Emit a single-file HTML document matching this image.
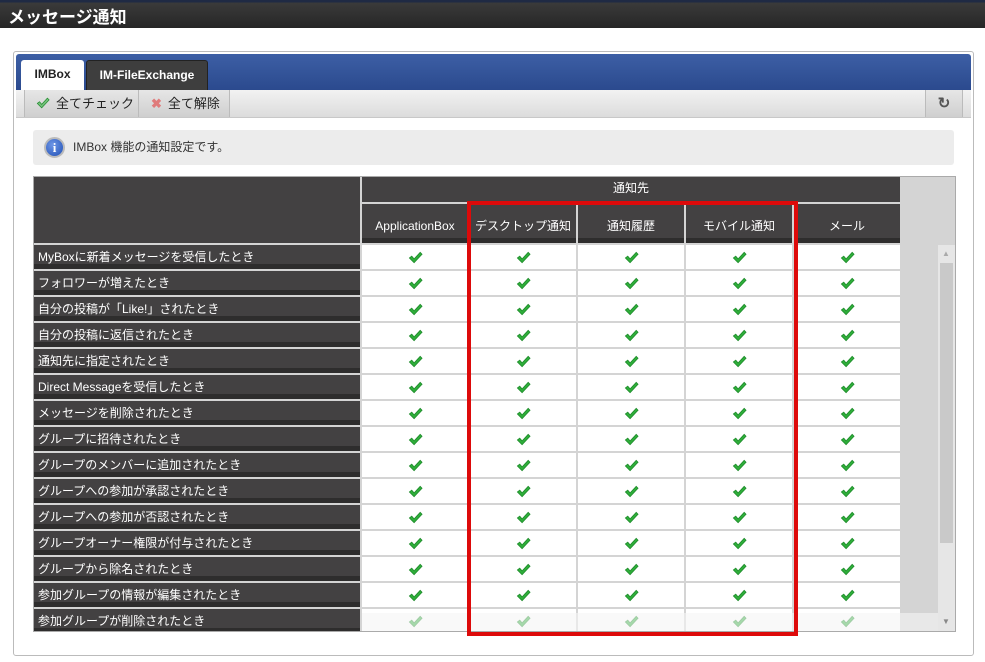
<!DOCTYPE html>
<html><head><meta charset="utf-8">
<style>
*{margin:0;padding:0;box-sizing:border-box}
body{width:985px;height:662px;background:#fff;position:relative;overflow:hidden;font-family:"Liberation Sans","Noto Sans CJK JP",sans-serif}
.a{position:absolute}
#hdr{left:0;top:0;width:985px;height:28px;background:linear-gradient(#1f2a44 0,#1f2a44 2px,#3a3a3a 3px,#262626 28px)}
#hdr span{position:absolute;left:8px;top:3px;color:#fff;font-weight:bold;font-size:17px}
#panel{left:13px;top:51px;width:961px;height:605px;border:1px solid #bbb;border-radius:3px}
#tabbar{left:16px;top:54px;width:955px;height:36px;background:linear-gradient(#3d5fa5,#2b4a8e);border-radius:3px 3px 0 0}
.tab{top:60px;height:30px;font-size:12px;font-weight:bold;text-align:center;line-height:29px;border-radius:3px 3px 0 0}
#tb{left:16px;top:90px;width:955px;height:28px;background:linear-gradient(#f2f2f2,#dcdcdc);border-bottom:1px solid #c8c8c8}
.btn{top:90px;height:27px;background:linear-gradient(#e6e6e6,#cfcfcf);border-left:1px solid #bbb;border-right:1px solid #bbb;font-size:13px;color:#222;line-height:27px}
#info{left:33px;top:130px;width:921px;height:35px;background:#ececec;border-radius:3px;font-size:12px;color:#333;line-height:35px;padding-left:40px}
#tbl{left:33px;top:176px;width:923px;height:456px;border:1px solid #aaa;background:#d4d4d4}
.dk{background:#434142;color:#fff}
.lab{left:34px;width:326px;height:24px;background:linear-gradient(#434142 0,#434142 19px,#2e2d2d 19px);color:#fff;font-size:12px;line-height:25px;padding-left:4px}
.h2{top:204px;height:39px;width:106px;background:linear-gradient(#434142 0,#434142 34px,#2e2d2d 34px);color:#fff;font-size:12px;text-align:center;line-height:44px}
</style></head><body>
<svg width="0" height="0" style="position:absolute"><defs>
<symbol id="ck" viewBox="0 0 16 16"><path d="M1.5 8.5 L4 6.5 L6.5 9.5 L13 2.5 L15 4.5 L6.5 13.5 Z" fill="#2fae3a" stroke="#1d8a2a" stroke-width="0.8"/></symbol>
</defs></svg>
<div id="hdr" class="a"><span>メッセージ通知</span></div>
<div id="panel" class="a"></div>
<div id="tabbar" class="a"></div>
<div class="a tab" style="left:21px;width:63px;background:#fff;color:#222">IMBox</div>
<div class="a tab" style="left:86px;width:122px;background:#3e3e3e;color:#fff;border:1px solid #222;border-bottom:none">IM-FileExchange</div>
<div id="tb" class="a"></div>
<div class="a btn" style="left:24px;width:115px;padding-left:11px"><svg width="14" height="14" style="vertical-align:-2px;margin-right:6px"><use href="#ck" fill-opacity=".6"/></svg>全てチェック</div>
<div class="a btn" style="left:139px;width:91px;padding-left:12px;border-left:none"><span style="color:#e07b7b;font-weight:bold;margin-right:6px">✖</span>全て解除</div>
<div class="a btn" style="left:925px;width:38px;text-align:center;color:#555;font-weight:bold;font-size:15px">↻</div>
<div id="info" class="a">IMBox 機能の通知設定です。</div>
<div class="a" style="left:44px;top:137px;width:21px;height:21px;border-radius:50%;background:radial-gradient(circle at 40% 35%,#6f97e6,#1f4fb5);border:2px solid #bbb;color:#fff;font-weight:bold;font-size:13px;text-align:center;line-height:17px;font-family:'Liberation Serif',serif">i</div>
<div id="tbl" class="a"></div>
<div class="a dk" style="left:34px;top:177px;width:326px;height:66px"></div>
<div class="a dk" style="left:362px;top:177px;width:538px;height:25px;font-size:12px;text-align:center;line-height:22px">通知先</div>
<div class="a h2" style="left:362px">ApplicationBox</div>
<div class="a h2" style="left:470px">デスクトップ通知</div>
<div class="a h2" style="left:578px">通知履歴</div>
<div class="a h2" style="left:686px">モバイル通知</div>
<div class="a h2" style="left:794px">メール</div>
<div class="a" style="left:938px;top:245px;width:17px;height:386px;background:#e6e6e6"></div>
<div class="a" style="left:940px;top:263px;width:13px;height:280px;background:#c9c9c9"></div>
<div class="a" style="left:942px;top:249px;color:#aaa;font-size:8px">▲</div>
<div class="a" style="left:942px;top:617px;color:#888;font-size:8px">▼</div>

<div class="a lab" style="top:245px">MyBoxに新着メッセージを受信したとき</div>
<div class="a lab" style="top:271px">フォロワーが増えたとき</div>
<div class="a lab" style="top:297px">自分の投稿が「Like!」されたとき</div>
<div class="a lab" style="top:323px">自分の投稿に返信されたとき</div>
<div class="a lab" style="top:349px">通知先に指定されたとき</div>
<div class="a lab" style="top:375px">Direct Messageを受信したとき</div>
<div class="a lab" style="top:401px">メッセージを削除されたとき</div>
<div class="a lab" style="top:427px">グループに招待されたとき</div>
<div class="a lab" style="top:453px">グループのメンバーに追加されたとき</div>
<div class="a lab" style="top:479px">グループへの参加が承認されたとき</div>
<div class="a lab" style="top:505px">グループへの参加が否認されたとき</div>
<div class="a lab" style="top:531px">グループオーナー権限が付与されたとき</div>
<div class="a lab" style="top:557px">グループから除名されたとき</div>
<div class="a lab" style="top:583px">参加グループの情報が編集されたとき</div>
<div class="a lab" style="top:609px;height:22px">参加グループが削除されたとき</div>

<svg class="a" style="left:362px;top:245px" width="538" height="386">
<defs><g id="row">
<rect x="0" y="0" width="106" height="24" fill="#fff"/><use href="#ck" x="46" y="5" width="15" height="15"/>
<rect x="108" y="0" width="106" height="24" fill="#fff"/><use href="#ck" x="154" y="5" width="15" height="15"/>
<rect x="216" y="0" width="106" height="24" fill="#fff"/><use href="#ck" x="262" y="5" width="15" height="15"/>
<rect x="324" y="0" width="106" height="24" fill="#fff"/><use href="#ck" x="370" y="5" width="15" height="15"/>
<rect x="432" y="0" width="106" height="24" fill="#fff"/><use href="#ck" x="478" y="5" width="15" height="15"/>
</g></defs>
<use href="#row" y="0"/><use href="#row" y="26"/><use href="#row" y="52"/><use href="#row" y="78"/><use href="#row" y="104"/>
<use href="#row" y="130"/><use href="#row" y="156"/><use href="#row" y="182"/><use href="#row" y="208"/><use href="#row" y="234"/>
<use href="#row" y="260"/><use href="#row" y="286"/><use href="#row" y="312"/><use href="#row" y="338"/><use href="#row" y="364"/>
</svg>
<div class="a" style="left:362px;top:613px;width:576px;height:18px;background:rgba(245,245,245,.6)"></div>
<div class="a" style="left:467px;top:201px;width:331px;height:435px;border:4px solid #dd0a0a"></div>
</body></html>
